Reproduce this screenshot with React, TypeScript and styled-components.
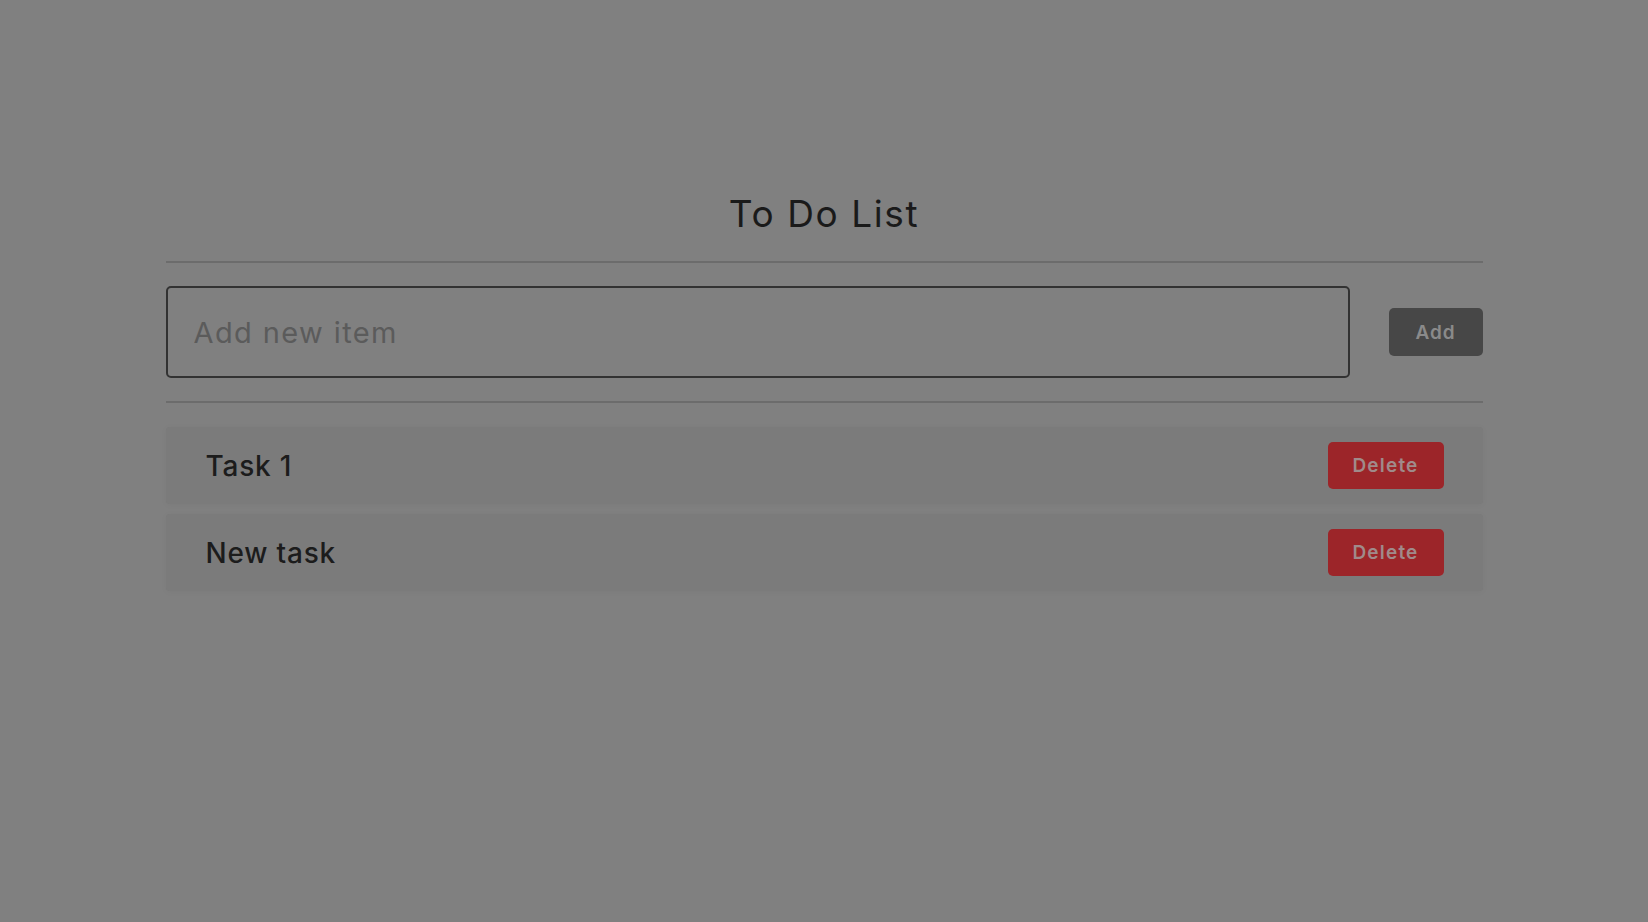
import React from "react";
import styled, { createGlobalStyle } from "styled-components";

const GlobalStyle = createGlobalStyle`
  html, body {
    margin: 0;
    padding: 0;
    background: #808080;
  }
  body {
    font-family: Inter, "Noto Sans", "Liberation Sans", sans-serif;
    color: #1c1c1c;
  }
  * { box-sizing: border-box; }
`;

const Page = styled.div`
  width: 1648px;
  min-height: 922px;
  background: #808080;
  padding-top: 189px;
`;

const Container = styled.main`
  width: 1317px;
  margin: 0 auto;
`;

const Title = styled.h1`
  margin: 0;
  text-align: center;
  font-size: 37px;
  font-weight: 400;
  line-height: 50px;
  letter-spacing: 1.6px;
  color: #1a1a1a;
`;

const Divider = styled.hr<{ $top: number }>`
  border: none;
  height: 2px;
  background: #6c6c6c;
  margin: ${(p) => p.$top}px 0 0;
`;

const InputRow = styled.form`
  display: flex;
  align-items: center;
  gap: 39px;
  margin-top: 23px;
`;

const TextInput = styled.input`
  flex: 1;
  height: 92px;
  border: 2px solid #323232;
  border-radius: 5px;
  background: transparent;
  padding: 0 26px;
  font-family: inherit;
  font-size: 29px;
  letter-spacing: 1.4px;
  color: #1a1a1a;
  outline: none;
  &::placeholder {
    color: #5b5b5b;
  }
`;

const AddButton = styled.button`
  width: 94px;
  height: 48px;
  border: none;
  border-radius: 5px;
  background: #474747;
  color: #8a8a8a;
  font-family: inherit;
  font-size: 19px;
  font-weight: 600;
  letter-spacing: 1px;
  cursor: pointer;
`;

const List = styled.ul`
  list-style: none;
  margin: 24px 0 0;
  padding: 0;
  display: flex;
  flex-direction: column;
  gap: 10px;
`;

const Row = styled.li`
  display: flex;
  align-items: center;
  justify-content: space-between;
  height: 77px;
  padding: 0 39px 0 40px;
  background: #7b7b7b;
  border-radius: 3px;
  box-shadow: 0 1px 6px rgba(0, 0, 0, 0.04);
`;

const TaskText = styled.span`
  font-size: 28px;
  font-weight: 500;
  letter-spacing: 0.8px;
  color: #1c1c1c;
`;

const DeleteButton = styled.button`
  width: 116px;
  height: 47px;
  border: none;
  border-radius: 5px;
  background: #9c2529;
  color: #a08a8a;
  font-family: inherit;
  font-size: 19px;
  font-weight: 600;
  letter-spacing: 1.2px;
  cursor: pointer;
`;

const tasks = ["Task 1", "New task"];

export default function App() {
  return (
    <>
      <GlobalStyle />
      <Page>
        <Container>
          <Title>To Do List</Title>
          <Divider $top={22} />
          <InputRow onSubmit={(e) => e.preventDefault()}>
            <TextInput placeholder="Add new item" />
            <AddButton type="submit">Add</AddButton>
          </InputRow>
          <Divider $top={23} />
          <List>
            {tasks.map((t) => (
              <Row key={t}>
                <TaskText>{t}</TaskText>
                <DeleteButton>Delete</DeleteButton>
              </Row>
            ))}
          </List>
        </Container>
      </Page>
    </>
  );
}
